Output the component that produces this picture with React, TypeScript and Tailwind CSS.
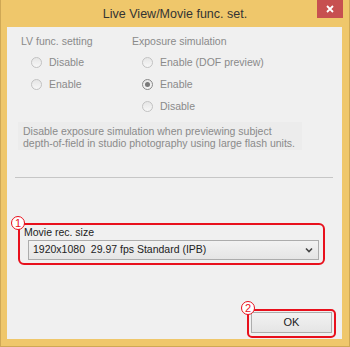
import React from "react";

function Radio({ label, checked }: { label: string; checked?: boolean }) {
  return (
    <div className="h-[22px] flex items-center">
      <span
        className={
          "ml-[10px] w-[11px] h-[11px] rounded-full border flex items-center justify-center bg-gradient-to-b from-[#e6e6e6] to-[#f7f7f7] " +
          (checked ? "border-[#8a8a8a]" : "border-[#c2c2c2]")
        }
      >
        {checked && <span className="w-[5px] h-[5px] rounded-full bg-[#7a7a7a]" />}
      </span>
      <span className="ml-[7px] text-[10.5px] leading-[12px] text-[#8a8a8a]">{label}</span>
    </div>
  );
}

function Badge({ n }: { n: string }) {
  return (
    <span className="w-[14px] h-[14px] rounded-full border border-[#e8101c] bg-white text-[#e8101c] text-[11px] leading-none flex items-center justify-center">
      {n}
    </span>
  );
}

export default function App() {
  return (
    <div className="w-[350px] h-[347px] bg-[#efc76b] border-l border-r border-b border-[#cfa855] flex flex-col font-['Liberation_Sans',Arial,sans-serif] text-[#222]">
      <div className="h-[27px] grid grid-cols-[1fr_auto_1fr]">
        <div />
        <div className="flex items-center pt-[1px] text-[12.5px] text-[#333]">Live View/Movie func. set.</div>
        <div className="flex justify-end items-start">
          <div className="mr-[6px] w-[26px] h-[18px] bg-[#c75050] flex items-center justify-center">
            <svg width="8" height="8" viewBox="0 0 8 8">
              <path d="M1 1L7 7M7 1L1 7" stroke="#fff" strokeWidth="1.8" />
            </svg>
          </div>
        </div>
      </div>
      <div className="flex-1 ml-[6px] mr-[7px] mb-[7px] bg-[#f0f0f0] flex flex-col">
        <div className="pt-[8px] pl-[14px] flex">
          <div className="w-[111px] flex flex-col">
            <div className="text-[10.5px] leading-[12px] text-[#8a8a8a]">LV func. setting</div>
            <div className="mt-[4px] flex flex-col">
              <Radio label="Disable" />
              <Radio label="Enable" />
            </div>
          </div>
          <div className="flex flex-col">
            <div className="text-[10.5px] leading-[12px] text-[#8a8a8a]">Exposure simulation</div>
            <div className="mt-[4px] flex flex-col">
              <Radio label="Enable (DOF preview)" />
              <Radio label="Enable" checked />
              <Radio label="Disable" />
            </div>
          </div>
        </div>
        <div className="mt-[5px] ml-[11px] w-[284px] h-[28px] bg-[#ececec] pt-[3px] pl-[5px] text-[10.5px] leading-[12px] text-[#8a8a8a]">
          <div>Disable exposure simulation when previewing subject</div>
          <div>depth-of-field in studio photography using large flash units.</div>
        </div>
        <div className="mt-[27px] ml-[8px] mr-[9px] h-[1px] bg-[#c6c6c6]" />
        <div className="relative mt-[45px] ml-[11px] w-[307px] h-[42px] border-2 border-[#e8101c] rounded-[6px] pl-[4px] pr-[4px] pt-[1px] flex flex-col">
          <div className="absolute left-[-9px] top-[-9px]">
            <Badge n="1" />
          </div>
          <div className="text-[10.5px] leading-[12px] text-[#222]">Movie rec. size</div>
          <div className="mt-[2px] ml-[4px] h-[20px] border border-[#acacac] bg-gradient-to-b from-[#f2f2f2] to-[#e5e5e5] flex items-center pl-[4px] pr-[5px]">
            <span className="flex-1 whitespace-pre text-[10.5px] text-[#222]">1920x1080  29.97 fps Standard (IPB)</span>
            <svg width="8" height="6" viewBox="0 0 8 6">
              <path d="M1 1.5L4 4.5L7 1.5" stroke="#444" strokeWidth="1.6" fill="none" />
            </svg>
          </div>
        </div>
        <div className="flex-1" />
        <div className="flex justify-end mr-[6px] mb-[1px]">
          <div className="relative w-[89px] h-[29px] border-2 border-[#e8101c] rounded-[5px] pt-[1px] pl-[2px]">
            <div className="absolute left-[-8px] top-[-10px]">
              <Badge n="2" />
            </div>
            <div className="w-[81px] h-[21px] border border-[#adadad] bg-gradient-to-b from-[#f2f2f2] to-[#e5e5e5] flex items-center justify-center text-[11px] text-[#222]">
              OK
            </div>
          </div>
        </div>
      </div>
    </div>
  );
}
